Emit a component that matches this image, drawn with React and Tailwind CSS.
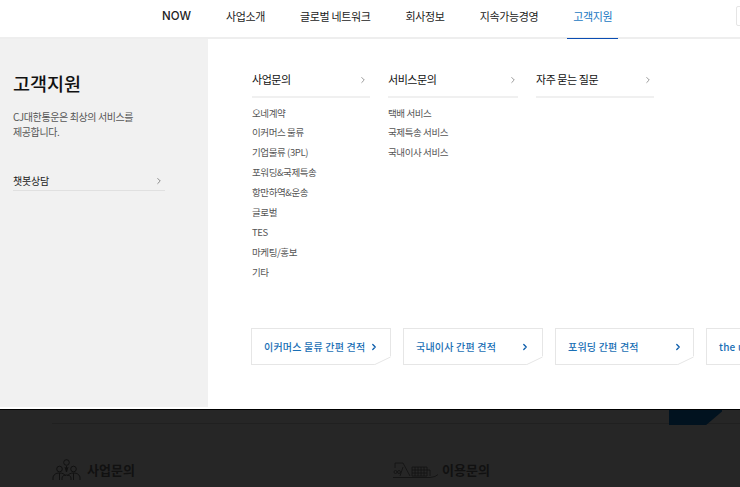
import { ChevronRight } from 'lucide-react'

const nav = ['NOW', '사업소개', '글로벌 네트워크', '회사정보', '지속가능경영', '고객지원']
const bizLinks = ['오네계약', '이커머스 물류', '기업물류 (3PL)', '포워딩&국제특송', '항만하역&운송', '글로벌', 'TES', '마케팅/홍보', '기타']
const svcLinks = ['택배 서비스', '국제특송 서비스', '국내이사 서비스']

function Arrow({ className }) {
  return <ChevronRight className={className} size={10} strokeWidth={1.8} />
}

function MenuColumn({ title, links, width, arrowRight }) {
  return (
    <div className={`shrink-0 ${width}`}>
      <div className="h-[59px] pt-[31px] border-b-2 border-[#f0f0f0] flex justify-between items-start">
        <span className="text-[11px] leading-[18px] tracking-[-0.45px] text-[#111]">{title}</span>
        <Arrow className={`mt-[5px] text-[#777] ${arrowRight}`} />
      </div>
      <ul className="pt-[5.500px]">
        {links.map((l) => (
          <li key={l} className="h-[19.9px] text-[9.5px] leading-[19.9px] tracking-[-0.4px] text-[#555]">{l}</li>
        ))}
      </ul>
    </div>
  )
}

function QuoteCard({ label, width, arrowRight = 'mr-[11px]' }) {
  return (
    <div className={`relative shrink-0 h-[37px] ${width} border border-[#e6e6e6] flex items-center justify-between pl-[12px] bg-white`}>
      <span className="text-[10px] font-medium text-[#1a6fb5] tracking-[0.2px] whitespace-nowrap">{label}</span>
      <ChevronRight className={`text-[#0a5cab] ${arrowRight}`} size={10} strokeWidth={3} />
      <svg className="absolute right-[-1px] bottom-[-1px]" width="17" height="9" viewBox="0 0 17 9">
        <path d="M0 9 L17 0 L17 9 Z" fill="#fff" />
        <path d="M0.5 8.7 L16.5 1" stroke="#e6e6e6" fill="none" />
      </svg>
    </div>
  )
}

export default function App() {
  return (
    <div className="w-[740px] h-[487px] overflow-hidden bg-white font-['Noto_Sans_CJK_KR','Noto_Sans',sans-serif]">
      <header className="relative h-[39px] border-b-2 border-[#eeeeee] flex pl-[162px] gap-[35px]">
        {nav.map((item, i) => (
          <div
            key={item}
            className={`relative h-[39px] shrink-0 leading-[32px] whitespace-nowrap ${i === 5 ? 'text-[#1a78c2]' : 'text-[#222]'} ${i === 0 ? 'text-[11.500px] font-["Inter"] font-medium' : 'text-[11px] tracking-[-0.35px]'}`}
          >
            {item}
            {i === 5 && <div className="absolute left-[-6px] right-[-6px] bottom-0 h-[1px] bg-[#0a4db3]" />}
          </div>
        ))}
        <div className="absolute left-[736px] top-[6px] w-[30px] h-[20px] border border-[#e5e5e5] rounded-[2px]" />
      </header>

      <div className="flex h-[370px]">
        <aside className="w-[208px] h-[368px] shrink-0 bg-[#f1f1f1] pl-[13px] pt-[31px]">
          <h2 className="text-[18.500px] leading-[26px] font-medium text-[#111]">고객지원</h2>
          <p className="mt-[13px] text-[10px] leading-[15px] tracking-[-0.4px] text-[#555]">
            CJ대한통운은 최상의 서비스를<br />제공합니다.
          </p>
          <div className="mt-[34px] w-[152px] h-[18px] border-b border-[#e0e0e0] flex justify-between items-start">
            <span className="text-[10px] leading-[16px] tracking-[-0.2px] text-[#222]">챗봇상담</span>
            <Arrow className="mt-[3px] mr-[1px] text-[#666]" />
          </div>
        </aside>

        <main className="flex-1 pl-[43px] min-w-0 overflow-hidden">
          <div className="flex pl-[1px]">
            <MenuColumn title="사업문의" links={bizLinks} width="w-[118px]" arrowRight="mr-[2px]" />
            <div className="w-[18px] shrink-0" />
            <MenuColumn title="서비스문의" links={svcLinks} width="w-[130px]" arrowRight="mr-0" />
            <div className="w-[18px] shrink-0" />
            <MenuColumn title="자주 묻는 질문" links={[]} width="w-[118px]" arrowRight="mr-[1px]" />
          </div>
          <div className="flex gap-[12px] mt-[45.500px]">
            <QuoteCard label="이커머스 물류 간편 견적" width="w-[140px]" />
            <QuoteCard label="국내이사 간편 견적" width="w-[140px]" arrowRight="mr-[12px]" />
            <QuoteCard label="포워딩 간편 견적" width="w-[139px]" arrowRight="mr-[10px]" />
            <QuoteCard label="the unbox" width="w-[140px]" />
          </div>
        </main>
      </div>

      <footer className="relative h-[78px] bg-[#262626] border-t border-black pl-[52px]">
        <div className="h-[14px] border-b border-[#202020]" />
        <div className="absolute left-[669px] top-0 w-[53px] h-[15px] bg-[#01121f] [clip-path:polygon(0_0,100%_0,100%_10%,70%_100%,0_100%)]" />
        <div className="flex mt-[35px] items-center">
          <div className="flex items-center gap-[6px] w-[341px]">
            <svg width="29" height="22" viewBox="0 0 29 22" fill="none" stroke="#111" strokeWidth="1">
              <circle cx="14.500" cy="3.500" r="2.800" />
              <circle cx="7.500" cy="10" r="2.800" />
              <circle cx="21.500" cy="10" r="2.800" />
              <path d="M1 21v-2c0-3 2.500-5 6.500-5 3 0 5 1 6 3M28 21v-2c0-3-2.500-5-6.500-5-3 0-5 1-6 3M14.500 7v5M13 8l1.500 5 1.500-5M7.500 14v7M21.500 14v7M10 21v-2c0-2 2-3 4.500-3s4.500 1 4.500 3v2" />
            </svg>
            <span className="text-[13px] font-bold text-[#111]">사업문의</span>
          </div>
          <div className="flex items-center gap-[3px]">
            <svg width="46" height="18" viewBox="0 0 46 18" fill="none" stroke="#111" strokeWidth="0.8">
              <path d="M0 16.500h37l5-1 3-2M2 7V2h8l7 13M10 6l-3 9M19 6h15v9H19zM22 6v9M25 6v9M28 6v9M31 6v9M34 9h3v6M19 9h15M19 12h15" />
              <circle cx="2.500" cy="11" r="1.500" />
              <circle cx="6" cy="11" r="1.500" />
            </svg>
            <span className="text-[13px] font-bold text-[#111]">이용문의</span>
          </div>
        </div>
      </footer>
    </div>
  )
}
